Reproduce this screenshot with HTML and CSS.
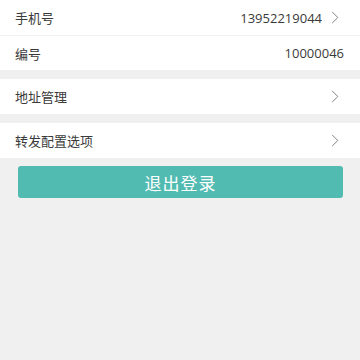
FILE: index.html
```html
<!DOCTYPE html>
<html lang="zh">
<head>
  <meta charset="UTF-8">
  <meta name="viewport" content="width=device-width, initial-scale=1.0">
  <title>设置</title>
  <link rel="stylesheet" href="styles.css">
</head>
<body>
  <div class="group">
    <div class="row line">
      <span class="label">手机号</span>
      <span class="value">13952219044</span>
      <svg class="arrow" viewBox="0 0 8 14"><path d="M1 1l6 6-6 6" /></svg>
    </div>
    <div class="row short">
      <span class="label">编号</span>
      <span class="value">10000046</span>
    </div>
  </div>

  <div class="group">
    <div class="row">
      <span class="label">地址管理</span>
      <svg class="arrow" viewBox="0 0 8 14"><path d="M1 1l6 6-6 6" /></svg>
    </div>
  </div>

  <div class="group last">
    <div class="row">
      <span class="label">转发配置选项</span>
      <svg class="arrow" viewBox="0 0 8 14"><path d="M1 1l6 6-6 6" /></svg>
    </div>
  </div>

  <div class="actions">
    <button class="logout">退出登录</button>
  </div>
</body>
</html>
```

FILE: styles.css
```css
body {
  margin: 0;
  padding: 0;
  background: #f0f0f0;
  font-family: "Noto Sans CJK SC", "Liberation Sans", sans-serif;
  color: #3a3a3a;
}
.group {
  background: white;
  margin-bottom: 9px;
}
.group.last {
  margin-bottom: 8px;
}
.row {
  display: flex;
  align-items: center;
  height: 35px;
  padding: 0 16px 0 15px;
  font-size: 13px;
}
.row.line {
  border-bottom: 1px solid #f0f0f0;
}
.row.short {
  height: 34px;
}
.label {
  flex: 1;
}
.value {
  font-family: "Open Sans", "Liberation Sans", sans-serif;
  font-size: 13px;
}
.arrow {
  width: 8px;
  height: 13px;
  margin-left: 9px;
  margin-right: 5px;
  fill: none;
  stroke: #777;
  stroke-width: 1;
}
.actions {
  padding: 0 17px 0 18px;
}
.logout {
  width: 100%;
  height: 32px;
  margin: 0;
  background: #52bbb1;
  color: white;
  border: none;
  border-radius: 3px;
  font-family: "Noto Sans CJK SC", sans-serif;
  font-size: 17px;
  letter-spacing: 1px;
}
```
